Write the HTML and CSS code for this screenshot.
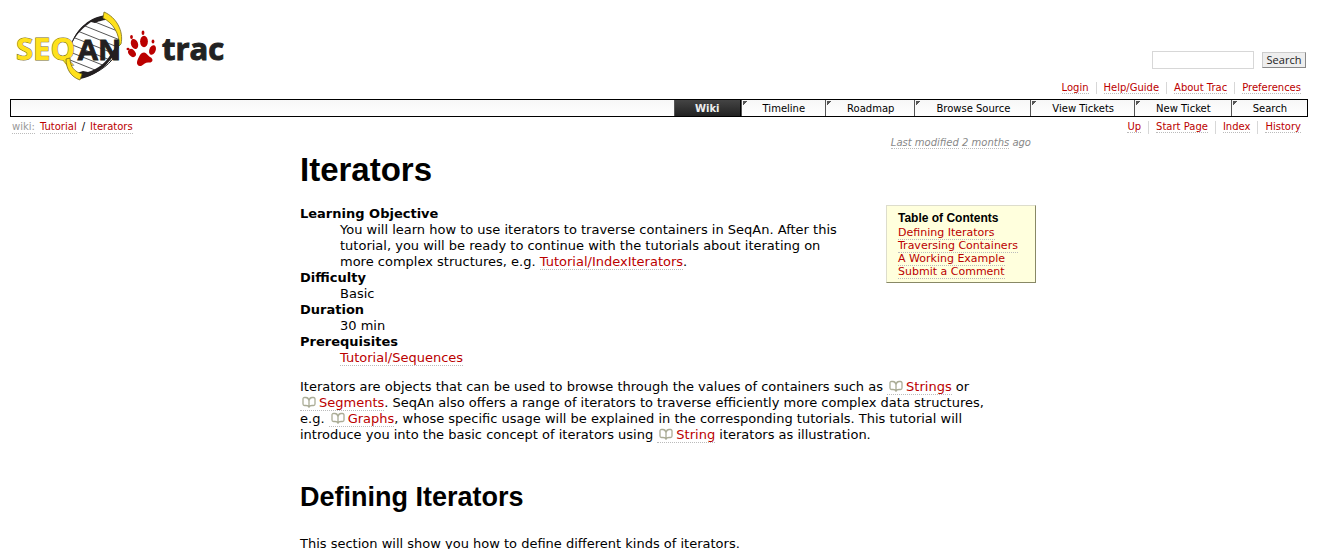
FILE: index.html
```html
<!DOCTYPE html>
<html lang="en">
<head>
<meta charset="utf-8">
<title>Tutorial/Iterators – SeqAn</title>
<link rel="stylesheet" href="styles.css">
</head>
<body>
<svg class="defs" aria-hidden="true">
  <symbol id="book" viewBox="0 0 14 12">
    <path d="M7 11V4.500C6.500 2.500 5.500 1.500 4 1.500H2.500Q1 1.500 1 3V8Q1 9.500 2.500 9.500H4Q6.500 9.500 7 11Q7.500 9.500 10 9.500H11.500Q13 9.500 13 8V3Q13 1.500 11.500 1.500H10C8.500 1.500 7.500 2.500 7 4.500" fill="none" stroke="#aaac96" stroke-width="1.300"/>
  </symbol>
</svg>
<header class="banner">
  <a class="logo" href="#" aria-label="SeqAn trac home">
    <svg width="216" height="76" viewBox="10 8 216 76">
      <clipPath id="helix"><path d="M69 60C68 40 82 20 105 16C120 23 125 42 112 60C103 70 91 76 80 78C74 74 70 68 69 60Z"/></clipPath>
      <path d="M69 60C68 40 82 20 105 16C120 23 125 42 112 60C103 70 91 76 80 78C74 74 70 68 69 60Z" fill="#fff" stroke="#222" stroke-width="1"/>
      <path clip-path="url(#helix)" d="M65 2L125 26M65 10L125 34M65 18L125 42M65 26L125 50M65 34L125 58M65 42L125 66M65 50L125 74M65 58L125 82" stroke="#555" stroke-width="1"/>
      <path d="M72 43C77 28 90 17 106 15L108 20C101 20 98 22 95 23L91 22C84 27 77 33 72 43Z" fill="#231f20"/>
      <path d="M119 42C115 60 98 76 80 79L77 73L83 71L88 72C98 69 107 62 112 52Z" fill="#231f20"/>
      <path d="M104 12C116 17 124 31 121 44L119 46C120 34 113 23 103 18Z" fill="#ffe11b" stroke="#776b1c" stroke-width=".8"/>
      <text class="logo-seq" x="16" y="60">SEQ</text>
      <path d="M66 59C66 69 71 77 80 80L82 74C75 72 70 67 70 58Z" fill="#ffe11b" stroke="#776b1c" stroke-width=".8"/>
      <text class="logo-an" x="77" y="60">AN</text>
      <g fill="#bb0000">
        <ellipse cx="132" cy="53" rx="3.300" ry="4.500" transform="rotate(-40 132 53)"/>
        <ellipse cx="134.500" cy="44" rx="3.500" ry="5.200" transform="rotate(-20 134.500 44)"/>
        <ellipse cx="144" cy="41.500" rx="3.900" ry="5.800"/>
        <ellipse cx="152.500" cy="50" rx="3.200" ry="5" transform="rotate(20 152.500 50)"/>
        <path d="M144 52.500C147 53 148 56 151 57.500C154 60 152 63 149 62.500C146 62 144 64 142 65.500C139 67 136.500 65 137 62C137.500 59 139 57 140 55C141 53.500 142 52.500 144 52.500Z"/>
        <ellipse cx="131.500" cy="37" rx="1.400" ry="2"/>
        <ellipse cx="143" cy="32.700" rx="1.400" ry="2.200"/>
        <ellipse cx="153" cy="41.500" rx="1.400" ry="2"/>
        <ellipse cx="128" cy="49" rx="1.500" ry="1.200"/>
      </g>
      <text class="logo-trac" x="162" y="60">trac</text>
    </svg>
  </a>
  <div class="tools">
    <form class="search">
      <input type="text" aria-label="Search terms">
      <button type="submit">Search</button>
    </form>
    <ul class="linkbar">
      <li><a href="#">Login</a></li><li><a href="#">Help/Guide</a></li><li><a href="#">About Trac</a></li><li><a href="#">Preferences</a></li>
    </ul>
  </div>
</header>
<nav class="mainnav">
  <a class="active" href="#">Wiki</a><a href="#">Timeline</a><a href="#">Roadmap</a><a href="#">Browse Source</a><a href="#">View Tickets</a><a href="#">New Ticket</a><a href="#">Search</a>
</nav>
<div class="ctx">
  <div class="path"><a class="muted" href="#">wiki:</a><a href="#">Tutorial</a><span>/</span><a href="#">Iterators</a></div>
  <ul class="linkbar">
    <li><a href="#">Up</a></li><li><a href="#">Start Page</a></li><li><a href="#">Index</a></li><li><a href="#">History</a></li>
  </ul>
</div>
<main class="wiki">
  <p class="modified"><a href="#">Last modified</a> <a href="#">2 months</a> ago</p>
  <h1>Iterators</h1>
  <div class="intro">
    <dl>
      <dt>Learning Objective</dt>
      <dd>You will learn how to use iterators to traverse containers in SeqAn. After this tutorial, you will be ready to continue with the tutorials about iterating on more complex structures, e.g. <a href="#">Tutorial/IndexIterators</a>.</dd>
      <dt>Difficulty</dt>
      <dd>Basic</dd>
      <dt>Duration</dt>
      <dd>30 min</dd>
      <dt>Prerequisites</dt>
      <dd><a href="#">Tutorial/Sequences</a></dd>
    </dl>
    <nav class="toc">
      <h4>Table of Contents</h4>
      <ol>
        <li><a href="#">Defining Iterators</a></li>
        <li><a href="#">Traversing Containers</a></li>
        <li><a href="#">A Working Example</a></li>
        <li><a href="#">Submit a Comment</a></li>
      </ol>
    </nav>
  </div>
  <p class="text">Iterators are objects that can be used to browse through the values of containers such as <a class="doc" href="#"><svg><use href="#book"/></svg>Strings</a> or <a class="doc" href="#"><svg><use href="#book"/></svg>Segments</a>. SeqAn also offers a range of iterators to traverse efficiently more complex data structures, e.g. <a class="doc" href="#"><svg><use href="#book"/></svg>Graphs</a>, whose specific usage will be explained in the corresponding tutorials. This tutorial will introduce you into the basic concept of iterators using <a class="doc" href="#"><svg><use href="#book"/></svg>String</a> iterators as illustration.</p>
  <h2>Defining Iterators</h2>
  <p class="text">This section will show you how to define different kinds of iterators.</p>
</main>
</body>
</html>
```
FILE: styles.css
```css
* { box-sizing: border-box; }
body {
  margin: 8px 10px;
  background: #fff;
  color: #000;
  font: 13px/16px Verdana, "DejaVu Sans", sans-serif;
}
a { color: #b00; text-decoration: none; border-bottom: 1px dotted #bbb; }
ul, ol, dl, dd, p, h1, h2, h4 { margin: 0; padding: 0; }
ul, ol { list-style: none; }
.defs { display: none; }
.banner { display: flex; justify-content: space-between; align-items: flex-end; height: 91px; }
.logo { align-self: flex-start; border: 0; }
.logo svg { display: block; }
.logo text { font-weight: bold; }
.logo-seq { font-family: "Open Sans", sans-serif; font-size: 31px; fill: #ffe11b; stroke: #776b1c; stroke-width: 1px; paint-order: stroke; }
.logo-an { font-family: "Liberation Sans", sans-serif; font-size: 30px; fill: #231f20; stroke: #231f20; stroke-width: 1px; }
.logo-trac { font-family: "Open Sans", sans-serif; font-size: 31px; fill: #222; stroke: #222; stroke-width: 1px; }
.tools { display: flex; flex-direction: column; align-items: flex-end; gap: 13px; padding-bottom: 5px; }
.search { display: flex; align-items: center; gap: 8px; margin-right: 2px; }
.search input { width: 102px; height: 18px; border: 1px solid #d7d7d7; font-size: 10px; }
.search button {
  height: 16px; width: 44px; padding: 0;
  background: #eee; color: #222;
  border: 1px solid; border-color: #ccc #888 #888 #ccc;
  font: 11px/12px "Open Sans", sans-serif;
}
.linkbar { display: flex; font-size: 10px; line-height: 12px; }
.linkbar li { padding: 0 7px; border-right: 1px solid #d7d7d7; }
.linkbar li:last-child { border: 0; }
.mainnav {
  display: flex; justify-content: flex-end;
  height: 18px; border: 1px solid #000;
  background: linear-gradient(#f7f7f7, #fff);
  font-size: 10px; line-height: 16px;
}
.mainnav a {
  padding: 1px 20px 0 21px; color: #000; line-height: 15px;
  border: 0; border-left: 1px solid #555;
  background: linear-gradient(135deg, #555 3px, transparent 3px) 1px 1px no-repeat;
}
.mainnav a.active { padding: 1px 20px 0; color: #eee; font-weight: bold; background: linear-gradient(#444, #222); border-right: 1px solid #000; }
.ctx { display: flex; justify-content: space-between; padding: 4px 0 2px 2px; font-size: 10px; line-height: 12px; }
.path { display: flex; gap: 5px; }
.muted { color: #999; }
.wiki { max-width: 754px; margin: 0 auto; padding-left: 18px; }
.modified { padding-right: 5px; text-align: right; color: #888; font-size: 10px; font-style: italic; line-height: 14px; }
.modified a { color: inherit; }
h1, h2 { font-family: "Liberation Sans", Arial, sans-serif; font-weight: bold; }
h1 { font-size: 33px; line-height: 40px; }
h2 { margin: 34px 0 19px; font-size: 27px; line-height: 40px; }
.intro { display: flex; justify-content: space-between; align-items: flex-start; margin-top: 15px; }
dl { flex: 1; padding-top: 1px; }
dt { font-weight: bold; }
dd { margin-left: 40px; padding-right: 36px; }
.toc { width: 150px; padding: 5px 11px 4px; background: #ffd; border: 1px solid; border-color: #ddc #886 #886 #ddc; font-size: 11px; line-height: 13px; white-space: nowrap; }
.toc h4 { font: bold 12px/15px "Liberation Sans", Arial, sans-serif; }
.text { margin-top: 13px; padding-right: 36px; }
.doc { white-space: nowrap; }
.doc svg { width: 14px; height: 12px; margin: 0 3px 0 2px; vertical-align: -1px; }
```
